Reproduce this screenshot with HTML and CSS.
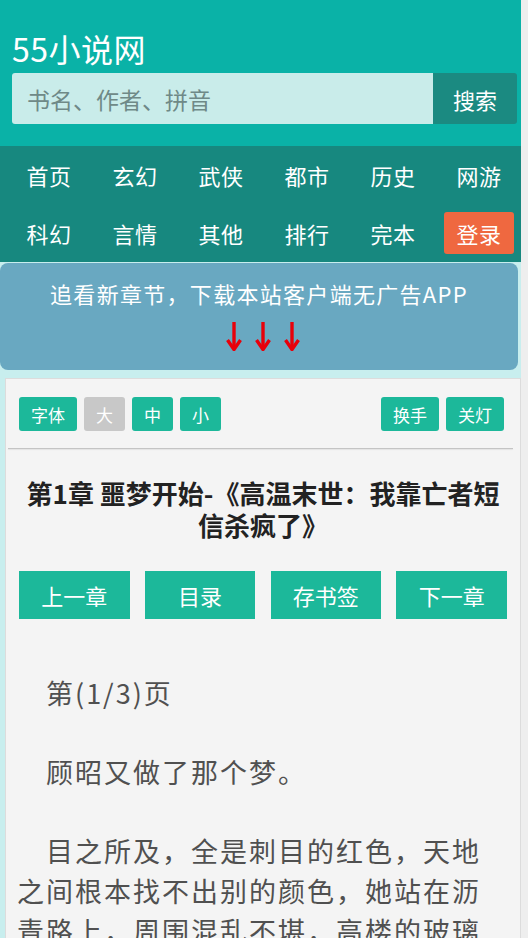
FILE: index.html
```html
<!DOCTYPE html>
<html lang="zh">
<head>
<meta charset="utf-8">
<title>55小说网</title>
<link rel="stylesheet" href="styles.css">
</head>
<body>
<div class="page">
  <header class="header">
    <div class="logo">55小说网</div>
    <form class="search">
      <input class="search-input" type="text" placeholder="书名、作者、拼音">
      <button class="search-btn" type="button">搜索</button>
    </form>
  </header>
  <nav class="nav">
    <a class="nav-item">首页</a>
    <a class="nav-item">玄幻</a>
    <a class="nav-item">武侠</a>
    <a class="nav-item">都市</a>
    <a class="nav-item">历史</a>
    <a class="nav-item">网游</a>
    <a class="nav-item">科幻</a>
    <a class="nav-item">言情</a>
    <a class="nav-item">其他</a>
    <a class="nav-item">排行</a>
    <a class="nav-item">完本</a>
    <a class="nav-item"><span class="login">登录</span></a>
  </nav>
  <div class="banner">
    <div class="banner-text">追看新章节，下载本站客户端无广告APP</div>
    <div class="arrows">
      <svg class="arrow" viewBox="0 0 16 30" width="16" height="30"><path d="M8 1 V27" stroke="#e8000b" stroke-width="3.4" fill="none"/><path d="M1.5 19 L8 28.5 L14.5 19" stroke="#e8000b" stroke-width="3.4" fill="none" stroke-linejoin="miter"/></svg>
      <svg class="arrow" viewBox="0 0 16 30" width="16" height="30"><path d="M8 1 V27" stroke="#e8000b" stroke-width="3.4" fill="none"/><path d="M1.5 19 L8 28.5 L14.5 19" stroke="#e8000b" stroke-width="3.4" fill="none" stroke-linejoin="miter"/></svg>
      <svg class="arrow" viewBox="0 0 16 30" width="16" height="30"><path d="M8 1 V27" stroke="#e8000b" stroke-width="3.4" fill="none"/><path d="M1.5 19 L8 28.5 L14.5 19" stroke="#e8000b" stroke-width="3.4" fill="none" stroke-linejoin="miter"/></svg>
    </div>
  </div>
  <main class="panel">
    <div class="toolbar">
      <div class="tool-group">
        <span class="tool wide">字体</span>
        <span class="tool off">大</span>
        <span class="tool">中</span>
        <span class="tool">小</span>
      </div>
      <div class="tool-group">
        <span class="tool wide">换手</span>
        <span class="tool wide">关灯</span>
      </div>
    </div>
    <div class="sep"></div>
    <h1 class="chapter-title">第1章 噩梦开始-《高温末世：我靠亡者短信杀疯了》</h1>
    <div class="pager">
      <a class="pager-btn">上一章</a>
      <a class="pager-btn">目录</a>
      <a class="pager-btn">存书签</a>
      <a class="pager-btn">下一章</a>
    </div>
    <div class="content">
      <p>第(1/3)页</p>
      <p>顾昭又做了那个梦。</p>
      <p>目之所及，全是刺目的红色，天地之间根本找不出别的颜色，她站在沥青路上，周围混乱不堪，高楼的玻璃</p>
    </div>
  </main>
</div>
</body>
</html>
```
FILE: styles.css
```css
html {
  background: #eeeeee;
}
body {
  margin: 0;
  font-family: "Noto Sans CJK SC", "Noto Sans", sans-serif;
  overflow: hidden;
  height: 938px;
}
.page {
  width: 521px;
  min-height: 938px;
  background: #c8eeee;
}
.header {
  background: #0ab2a7;
  padding: 28px 4px 22px 12px;
}
.logo {
  color: #ffffff;
  font-size: 32px;
  line-height: 40px;
  height: 40px;
  margin-bottom: 5px;
  letter-spacing: 0.5px;
}
.search {
  display: flex;
  height: 51px;
  margin: 0;
}
.search-input {
  flex: 1;
  min-width: 0;
  border: none;
  margin: 0;
  background: #c9ecea;
  border-radius: 3px 0 0 3px;
  padding: 0 0 0 15px;
  font-family: "Noto Sans CJK SC", sans-serif;
  font-size: 23px;
  color: #333;
  outline: none;
}
.search-input::placeholder {
  color: #6f8987;
}
.search-btn {
  width: 84px;
  border: none;
  margin: 0;
  background: #1b8a81;
  color: #ffffff;
  font-family: "Noto Sans CJK SC", sans-serif;
  font-size: 22px;
  border-radius: 0 3px 3px 0;
  padding: 0;
}
.nav {
  background: #17887f;
  display: grid;
  grid-template-columns: repeat(6, 86px);
  grid-auto-rows: 58px;
  padding-left: 6px;
}
.nav-item {
  display: flex;
  align-items: center;
  justify-content: center;
  color: #ffffff;
  font-size: 22px;
  letter-spacing: 0.5px;
}
.login {
  display: flex;
  align-items: center;
  justify-content: center;
  width: 70px;
  height: 42px;
  background: #ef6840;
  border-radius: 3px;
  color: #ffffff;
}
.banner {
  margin-top: 1px;
  width: 518px;
  background: #69a8c1;
  border-radius: 8px;
  padding: 15px 0 19px;
  text-align: center;
}
.banner-text {
  color: #ffffff;
  font-size: 22px;
  letter-spacing: 1.3px;
  line-height: 30px;
}
.arrows {
  display: flex;
  justify-content: center;
  gap: 13px;
  margin-top: 13px;
  height: 30px;
  padding-left: 8px;
}
.arrow {
  display: block;
}
.panel {
  margin: 8px 0 0 5px;
  width: 514px;
  background: #f4f4f4;
  border: 1px solid #dcdcdc;
  border-bottom: none;
  min-height: 560px;
}
.toolbar {
  display: flex;
  justify-content: space-between;
  padding: 18px 16px 0 13px;
}
.tool-group {
  display: flex;
  gap: 7px;
}
.tool {
  display: flex;
  align-items: center;
  justify-content: center;
  width: 41px;
  height: 34px;
  background: #1cb89a;
  color: #ffffff;
  font-size: 17px;
  border-radius: 3px;
}
.tool.wide {
  width: 58px;
}
.tool.off {
  background: #c8c8c8;
}
.sep {
  margin: 17px 7px 0 2px;
  height: 1px;
  background: #c4c4c4;
  box-shadow: 0 1px 1px #e2e2e2;
}
.chapter-title {
  margin: 28px 17px 0 17px;
  font-size: 26px;
  line-height: 32px;
  font-weight: bold;
  color: #222222;
  text-align: center;
}
.pager {
  display: flex;
  gap: 15.3px;
  padding: 30px 0 0 13px;
}
.pager-btn {
  display: flex;
  align-items: center;
  justify-content: center;
  width: 110.5px;
  height: 48px;
  background: #1cb89a;
  color: #ffffff;
  font-size: 22px;
}
.content {
  padding: 54px 24px 0 11px;
  color: #505050;
  font-size: 27px;
  letter-spacing: 2px;
  line-height: 40px;
}
.content p {
  margin: 0 0 39px;
  text-indent: 29px;
}
```
